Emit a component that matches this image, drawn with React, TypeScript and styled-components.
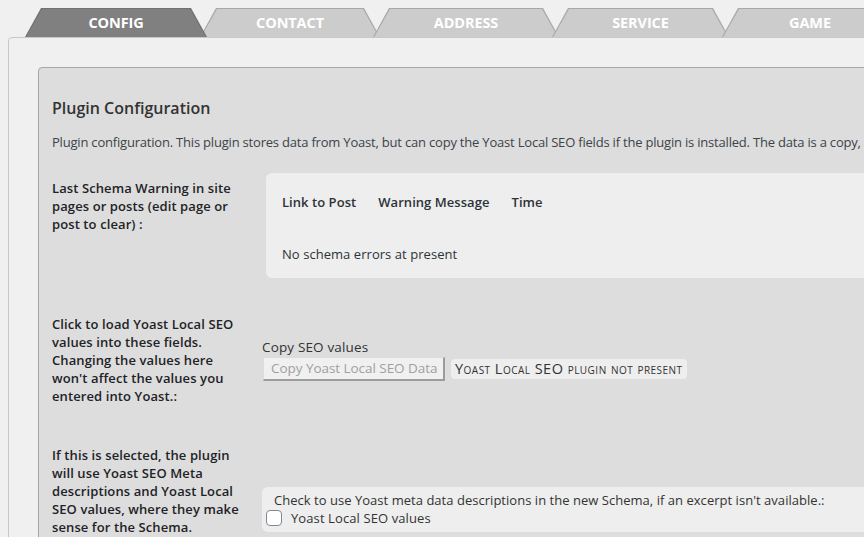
import React from "react";
import styled, { createGlobalStyle } from "styled-components";

const Global = createGlobalStyle`
  html, body {
    margin: 0;
    padding: 0;
    background: #f0f0f0;
    overflow: hidden;
  }
  body {
    font-family: "Open Sans", "Noto Sans", sans-serif;
    font-size: 13px;
    color: #2c3338;
  }
`;

const Page = styled.div`
  width: 1200px;
  padding: 8px 0 0 8px;
`;

const TabBar = styled.div`
  display: flex;
  padding-left: 17px;
  height: 29px;
`;

const Tab = styled.div<{ $w: number; $active?: boolean }>`
  position: relative;
  width: ${(p) => p.$w}px;
  height: 29px;
  margin-left: -7px;
  z-index: ${(p) => (p.$active ? 5 : 1)};
  display: flex;
  align-items: center;
  justify-content: center;
  color: #ffffff;
  font-weight: 700;
  font-size: 14.5px;
  letter-spacing: -0.1px;
  text-transform: uppercase;
  &:first-child {
    margin-left: 0;
  }
  &::before {
    content: "";
    position: absolute;
    inset: 0;
    background: ${(p) => (p.$active ? "#707070" : "#a8a8a8")};
    clip-path: polygon(16px 0, calc(100% - 16px) 0, 100% 100%, 0 100%);
    z-index: -2;
  }
  &::after {
    content: "";
    position: absolute;
    inset: 1px 0 0 0;
    background: ${(p) => (p.$active ? "#808080" : "#cccccc")};
    clip-path: polygon(17px 0, calc(100% - 17px) 0, calc(100% - 1.2px) 100%, 1.2px 100%);
    z-index: -1;
  }
`;

const Outer = styled.div`
  background: #f0f0f0;
  border: 1px solid #c8c8c8;
  border-radius: 4px 0 0 0;
  padding: 29px 0 0 29px;
  height: 600px;
`;

const Inner = styled.div`
  background: #dddddd;
  border: 1px solid #a6a6a6;
  border-radius: 4px 0 0 0;
  padding: 28px 13px 0 13px;
  height: 600px;
`;

const Heading = styled.h2`
  margin: 0;
  font-size: 16px;
  line-height: 24px;
  font-weight: 600;
  color: #333333;
`;

const Description = styled.p`
  margin: 13px 0 0 0;
  line-height: 18px;
  color: #3c434a;
  white-space: nowrap;
  letter-spacing: -0.2px;
`;

const FormRow = styled.div<{ $top: number; $align: string }>`
  display: grid;
  grid-template-columns: 210px 1fr;
  align-items: ${(p) => p.$align};
  margin-top: ${(p) => p.$top}px;
`;

const Label = styled.div<{ $pad?: number }>`
  font-weight: 600;
  line-height: 18px;
  color: #1d2327;
  padding-top: ${(p) => p.$pad ?? 0}px;
  letter-spacing: 0.1px;
  width: 196px;
`;

const WarningBox = styled.div`
  margin-left: 4px;
  background: #eeeeee;
  border-radius: 6px 0 0 6px;
  height: 105px;
  box-sizing: border-box;
  padding: 20px 16px 15px 16px;
  display: flex;
  flex-direction: column;
  justify-content: space-between;
  line-height: 18px;
`;

const TableHead = styled.div`
  display: flex;
  gap: 22px;
  font-weight: 600;
  color: #2c3338;
  letter-spacing: 0.05px;
`;

const Cell = styled.div`
  color: #2c3338;
  letter-spacing: 0.05px;
`;

const CopyField = styled.div`
  display: flex;
  flex-direction: column;
  align-items: flex-start;
  gap: 2px;
`;

const FieldTitle = styled.div`
  font-size: 13.5px;
  line-height: 15px;
  color: #333333;
  letter-spacing: 0.15px;
`;

const ButtonLine = styled.div`
  display: flex;
  align-items: center;
  gap: 6px;
`;

const DisabledButton = styled.button`
  font-family: inherit;
  font-size: 13.5px;
  letter-spacing: -0.05px;
  height: 24px;
  width: 182px;
  margin-left: 1px;
  padding: 0 7px;
  background: #f0f0f0;
  color: #a0a0a0;
  border: 1px solid #dcdcdc;
  border-right: 2px solid #9c9c9c;
  border-bottom: 2px solid #9c9c9c;
  text-align: left;
  white-space: nowrap;
`;

const Badge = styled.span`
  display: inline-flex;
  align-items: center;
  height: 20px;
  padding: 0 4px;
  background: #eeeeee;
  border-radius: 4px;
  font-size: 14.5px;
  font-variant: small-caps;
  color: #333333;
  letter-spacing: 0.48px;
  white-space: nowrap;
`;

const CheckBox = styled.div`
  align-self: end;
  margin-bottom: 4px;
  background: #eeeeee;
  border-radius: 6px 0 0 6px;
  height: 45px;
  box-sizing: border-box;
  padding: 4px 0 0 4px;
  line-height: 18px;
  white-space: nowrap;
`;

const CheckText = styled.div`
  padding-left: 8px;
  color: #333333;
  letter-spacing: 0.03px;
`;

const CheckLine = styled.label`
  display: flex;
  align-items: center;
  gap: 9px;
  color: #333333;
  letter-spacing: 0.1px;
`;

const Square = styled.span`
  width: 14px;
  height: 14px;
  background: #ffffff;
  border: 1px solid #7e8993;
  border-radius: 4px;
`;

const tabs = [
  { name: "Config", w: 182, active: true },
  { name: "Contact", w: 180 },
  { name: "Address", w: 186 },
  { name: "Service", w: 177 },
  { name: "Game", w: 176 },
];

export default function App() {
  return (
    <>
      <Global />
      <Page>
        <TabBar>
          {tabs.map((t) => (
            <Tab key={t.name} $w={t.w} $active={t.active}>
              {t.name}
            </Tab>
          ))}
        </TabBar>
        <Outer>
          <Inner>
            <Heading>Plugin Configuration</Heading>
            <Description>
              Plugin configuration. This plugin stores data from Yoast, but can copy the Yoast Local SEO
              fields if the plugin is installed. The data is a copy,
            </Description>

            <FormRow $top={22} $align="start">
              <Label $pad={6}>Last Schema Warning in site pages or posts (edit page or post to clear) :</Label>
              <WarningBox>
                <TableHead>
                  <span>Link to Post</span>
                  <span>Warning Message</span>
                  <span>Time</span>
                </TableHead>
                <Cell>No schema errors at present</Cell>
              </WarningBox>
            </FormRow>

            <FormRow $top={37} $align="center">
              <Label>
                Click to load Yoast Local SEO values into these fields. Changing the values here won't affect
                the values you entered into Yoast.:
              </Label>
              <CopyField>
                <FieldTitle>Copy SEO values</FieldTitle>
                <ButtonLine>
                  <DisabledButton disabled>Copy Yoast Local SEO Data</DisabledButton>
                  <Badge>Yoast Local SEO plugin not present</Badge>
                </ButtonLine>
              </CopyField>
            </FormRow>

            <FormRow $top={41} $align="end">
              <Label>
                If this is selected, the plugin will use Yoast SEO Meta descriptions and Yoast Local SEO values,
                where they make sense for the Schema.
              </Label>
              <CheckBox>
                <CheckText>
                  Check to use Yoast meta data descriptions in the new Schema, if an excerpt isn't available.:
                </CheckText>
                <CheckLine>
                  <Square />
                  Yoast Local SEO values
                </CheckLine>
              </CheckBox>
            </FormRow>
          </Inner>
        </Outer>
      </Page>
    </>
  );
}
